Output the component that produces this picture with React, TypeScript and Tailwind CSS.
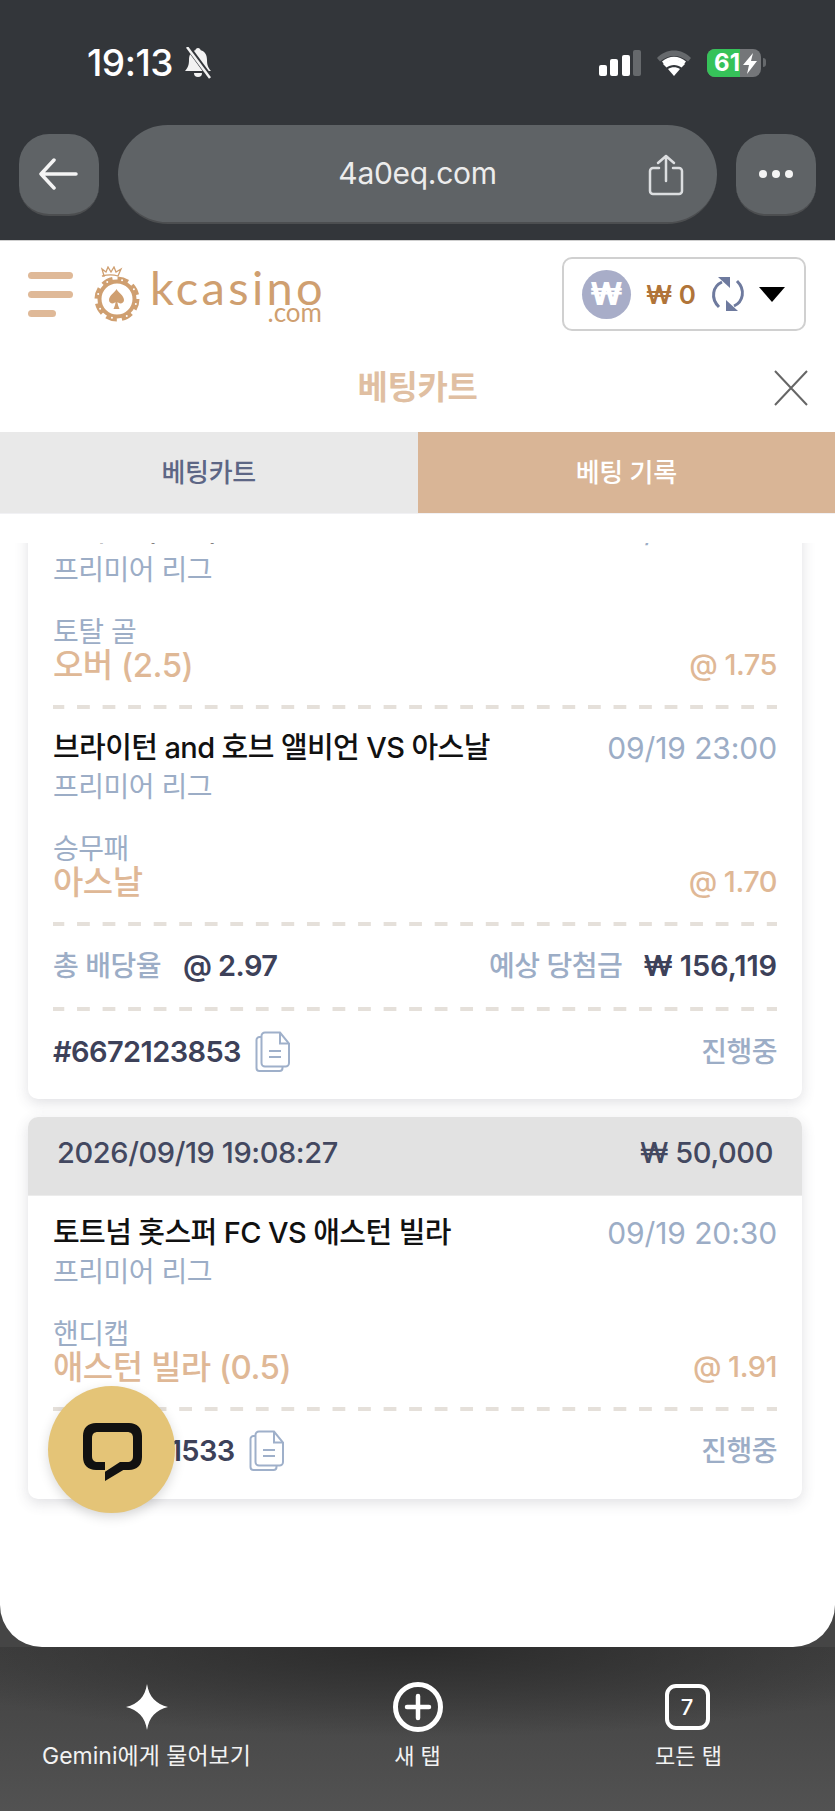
import React from "react";

const Dash = () => (
  <div className="h-[4px] w-full bg-[linear-gradient(90deg,#e5e0da_50%,transparent_50%)] bg-[length:25.55px_4px] bg-[position:-1.5px_0]" />
);

const Doc = () => (
  <svg width="36" height="42" viewBox="0 0 36 42" fill="none" stroke="#9fb0ca" strokeWidth="2">
    <path d="M7 6H4.5A3 3 0 0 0 1.5 9v28a3 3 0 0 0 3 3h20a3 3 0 0 0 3-3v-1" />
    <path d="M10 1.5h15l9 11V32a3.5 3.5 0 0 1-3.500 3.500H10A3.500 3.500 0 0 1 6.500 32V5A3.500 3.500 0 0 1 10 1.500Z" />
    <path d="M25 1.500v11h9" />
    <path d="M14 20h12M14 26h12" />
  </svg>
);

type Bet = { title: string; time: string; market: string; pick: string; odds: string };

const BetRow = ({ b }: { b: Bet }) => (
  <div className="px-[25px]">
    <div className="flex h-[38px] items-center justify-between">
      <span className="text-[29px] font-medium leading-[34px] tracking-[-0.6px] text-[#111]">{b.title}</span>
      <span className="text-[30px] leading-[34px] tracking-[-0.1px] text-[#9cadc6]">{b.time}</span>
    </div>
    <div className="flex h-[38px] items-center pt-[2px] text-[28px] leading-[34px] tracking-[-0.5px] text-[#9cadc6]">프리미어 리그</div>
    <div className="mt-[26px] flex h-[34px] items-center pt-[1px] text-[28px] leading-[32px] tracking-[-0.5px] text-[#9cadc6]">{b.market}</div>
    <div className="flex h-[34px] items-center justify-between text-[#dfb896]">
      <span className="text-[33px] font-medium leading-[34px] tracking-[-0.5px]">{b.pick}</span>
      <span className="text-[29px] font-medium leading-[34px] tracking-[-0.5px]">{b.odds}</span>
    </div>
  </div>
);

const Footer = ({ id }: { id: string }) => (
  <div className="flex h-[40px] items-center justify-between px-[25px]">
    <div className="flex items-center gap-[14px]">
      <span className="text-[29px] font-semibold tracking-[-0.6px] text-[#3d4159]">{id}</span>
      <Doc />
    </div>
    <span className="text-[28px] font-medium tracking-[-0.5px] text-[#9cadc6]">진행중</span>
  </div>
);

const Card = ({ children }: { children: React.ReactNode }) => (
  <div className="overflow-hidden rounded-[10px] bg-white shadow-[0_4px_14px_rgba(60,60,80,0.16)]">{children}</div>
);

const teeth = [0, 45, 90, 135, 180, 225, 270, 315];

export default function App() {
  return (
    <div className="relative flex h-[1811px] w-[835px] flex-col overflow-hidden bg-[#454545] font-['Inter','Noto_Sans_CJK_KR',sans-serif]">
      {/* browser chrome */}
      <div className="h-[240px] shrink-0 bg-[#33363a]">
        <div className="flex h-[125px] items-center justify-between pl-[87px] pr-[69px]">
          <div className="flex items-center gap-[10px]">
            <span className="text-[37px] font-medium tracking-[-0.5px] text-white">19:13</span>
            <svg width="30" height="32" viewBox="0 0 30 32">
              <path d="M15 1c1.500 0 2.500 1 2.700 2.300C22 4.500 24 8 24 13c0 5 1 7.500 4 11H2c3-3.500 4-6 4-11 0-5 2-8.500 6.300-9.700C12.500 2 13.500 1 15 1Z" fill="#f2f2f2" />
              <path d="M11 26h8a4 4 0 0 1-8 0Z" fill="#f2f2f2" />
              <path d="M5 0l22 30" stroke="#33363a" strokeWidth="5" />
              <path d="M4 0l23 31" stroke="#f2f2f2" strokeWidth="2.500" />
            </svg>
          </div>
          <div className="flex items-center">
            <svg width="42" height="26" viewBox="0 0 42 26" className="mr-[15px]">
              <rect x="0" y="15" width="8" height="11" rx="2" fill="#fff" />
              <rect x="11" y="9" width="8" height="17" rx="2" fill="#fff" />
              <rect x="23" y="5" width="8" height="21" rx="2" fill="#fff" />
              <rect x="34" y="0" width="8" height="26" rx="2" fill="#66696c" />
            </svg>
            <svg width="36" height="28" viewBox="0 0 36 28" className="mr-[15px]">
              <path d="M1 9C10 -1 26 -1 35 9l-3 3.500C24 5 12 5 4 12.500Z" fill="#66696c" />
              <path d="M7 15c6-6 16-6 22 0l-3.500 3.500c-4-3.500-11-3.500-15 0Z" fill="#fff" />
              <path d="M6 12.500c7-6.500 17-6.500 24 0l-2 2.500c-6-5.500-14-5.500-20 0Z" fill="#fff" />
              <path d="M12 20c3.500-2.500 8.500-2.500 12 0l-6 7Z" fill="#fff" />
            </svg>
            <div className="flex h-[28px] w-[54px] overflow-hidden rounded-[8px] bg-[#747679]">
              <div className="flex h-full w-[33px] items-center justify-end bg-[#36c259] text-[24px] font-bold leading-none text-white">61</div>
              <svg width="21" height="28" viewBox="0 0 21 28">
                <path d="M13 4 3 16h6l-2 9 10-13h-6Z" fill="#fff" />
              </svg>
            </div>
            <div className="ml-[2px] h-[9px] w-[3px] rounded-r-[3px] bg-[#66696c]" />
          </div>
        </div>
        <div className="flex h-[99px] items-center gap-[19px] px-[19px]">
          <div className="flex h-[82px] w-[80px] items-center justify-center rounded-[30px] border-b-2 border-[#4c4e50] bg-[#5f6366]">
            <svg width="40" height="32" viewBox="0 0 40 32" fill="none" stroke="#f4f4f4" strokeWidth="3.500" strokeLinecap="round" strokeLinejoin="round" className="-ml-[2px]">
              <path d="M38 16H3M16 2 3 16l13 14" />
            </svg>
          </div>
          <div className="relative flex h-[99px] flex-1 items-center justify-center rounded-[50px] border-b-2 border-[#4c4e50] bg-[#5f6366]">
            <span className="text-[30px] tracking-[-0.3px] text-[#ececec]">4a0eq.com</span>
            <svg width="36" height="42" viewBox="0 0 36 42" fill="none" stroke="#dcdee0" strokeWidth="2.500" strokeLinecap="round" strokeLinejoin="round" className="absolute right-[33px] top-[29px]">
              <path d="M11 14H5a3 3 0 0 0-3 3v20a3 3 0 0 0 3 3h26a3 3 0 0 0 3-3V17a3 3 0 0 0-3-3h-6" />
              <path d="M18 27V2M10 9l8-7 8 7" />
            </svg>
          </div>
          <div className="flex h-[82px] w-[80px] items-center justify-center gap-[5px] rounded-[30px] border-b-2 border-[#4c4e50] bg-[#5f6366]">
            <div className="h-[8px] w-[8px] rounded-full bg-[#f4f4f4]" />
            <div className="h-[8px] w-[8px] rounded-full bg-[#f4f4f4]" />
            <div className="h-[8px] w-[8px] rounded-full bg-[#f4f4f4]" />
          </div>
        </div>
      </div>

      {/* page sheet */}
      <div className="relative flex h-[1407px] shrink-0 flex-col overflow-hidden rounded-b-[42px] border-t border-[#cfcfcf] bg-white">
        <div className="flex h-[106px] shrink-0 items-center justify-between pl-[28px] pr-[29px]">
          <div className="flex items-center">
            <div className="flex w-[45px] flex-col gap-[12px]">
              <div className="h-[7px] w-[45px] rounded-full bg-[#dfb998]" />
              <div className="h-[7px] w-[45px] rounded-full bg-[#dfb998]" />
              <div className="h-[7px] w-[28px] rounded-full bg-[#dfb998]" />
            </div>
            <svg width="46" height="56" viewBox="0 0 46 56" className="ml-[21px]">
              <path d="M10 10 8 3l4 3 2-5 3 5 3-5 2 5 5-3-3 7c-5-1.500-10-1.500-16 0Z" fill="none" stroke="#cf9f70" strokeWidth="1.300" />
              <circle cx="23" cy="33" r="17.500" fill="none" stroke="#cf9f70" strokeWidth="4" />
              <circle cx="23" cy="33" r="20" fill="none" stroke="#cf9f70" strokeWidth="5" strokeDasharray="10.700 5" />
              {teeth.map((a) => {
                const t = ((a + 15) * Math.PI) / 180;
                return <circle key={a} cx={23 + 19.5 * Math.cos(t)} cy={33 + 19.5 * Math.sin(t)} r="1" fill="#fff" />;
              })}
              <path d="M22.500 23c2 4 7.500 6.500 7.500 11 0 3.500-4.500 4.500-6.500 2 0 2 1 5 2 7h-6c1-2 2-5 2-7-2 2.500-6.500 1.500-6.500-2 0-4.500 5.500-7 7.500-11Z" fill="#cf9f70" />
            </svg>
            <div className="ml-[10px] flex w-[172px] flex-col items-end">
              <span className="h-[35px] w-full text-left font-['Lato',sans-serif] text-[47px] leading-[35px] tracking-[3.300px] text-[#cf9f70]">kcasino</span>
              <span className="h-[14px] font-['Lato',sans-serif] text-[26px] leading-[14px] text-[#cf9f70]">.com</span>
            </div>
          </div>
          <div className="flex h-[74px] w-[244px] items-center rounded-[10px] border-2 border-[#d0d0d0] pl-[18px]">
            <div className="flex h-[49px] w-[49px] items-center justify-center rounded-full bg-[#a8adc8] text-[31px] font-extrabold text-white">₩</div>
            <span className="ml-[15px] whitespace-pre text-[26px] font-semibold text-[#b07439]">₩ 0</span>
            <svg width="36" height="36" viewBox="0 0 36 36" fill="none" className="ml-[14px]">
              <path d="M12 6C3 10 0 22 9 31" stroke="#6e7a9e" strokeWidth="3" />
              <path d="M24 30c9-4 12-16 3-25" stroke="#6e7a9e" strokeWidth="3" />
              <path d="M8 1h12v11Z" fill="#6e7a9e" />
              <path d="M28 35H16V24Z" fill="#6e7a9e" />
            </svg>
            <svg width="26" height="15" viewBox="0 0 26 15" className="ml-[13px]">
              <path d="M0 0h26L13 15Z" fill="#000" />
            </svg>
          </div>
        </div>
        <div className="relative flex h-[85px] shrink-0 items-center justify-center pb-[3px]">
          <span className="text-[33px] font-semibold tracking-[-0.3px] text-[#e0bfa2]">베팅카트</span>
          <svg width="36" height="36" viewBox="0 0 36 36" stroke="#666" strokeWidth="2" className="absolute right-[26px] top-[23px]">
            <path d="M2 1l32 34M34 1 2 35" />
          </svg>
        </div>
        <div className="grid h-[82px] shrink-0 grid-cols-2 border-b border-[#f1f1f4] text-[26px] font-medium tracking-[-0.3px]">
          <div className="flex items-center justify-center bg-[#e9e9e9] text-[#5d6685]">베팅카트</div>
          <div className="flex items-center justify-center bg-[#d9b596] text-white">베팅 기록</div>
        </div>

        <div className="mt-[29px] flex flex-1 flex-col gap-[18px] overflow-hidden pl-[28px] pr-[33px]">
          <div className="-mt-[31px] shrink-0">
            <Card>
              <BetRow b={{ title: "맨체스터 시티 VS 브렌트", time: "09/19 20:30", market: "토탈 골", pick: "오버 (2.5)", odds: "@ 1.75" }} />
              <div className="mb-[20px] mt-[23px] px-[25px]"><Dash /></div>
              <BetRow b={{ title: "브라이턴 and 호브 앨비언 VS 아스날", time: "09/19 23:00", market: "승무패", pick: "아스날", odds: "@ 1.70" }} />
              <div className="mt-[23px] px-[25px]"><Dash /></div>
              <div className="mb-[21px] mt-[20px] flex h-[40px] items-center justify-between px-[25px]">
                <div className="flex items-center gap-[22px]">
                  <span className="text-[28px] font-medium tracking-[-0.5px] text-[#9cadc6]">총 배당율</span>
                  <span className="text-[29px] font-semibold tracking-[-0.6px] text-[#3d4159]">@ 2.97</span>
                </div>
                <div className="flex items-center gap-[21px]">
                  <span className="text-[28px] font-medium tracking-[-0.5px] text-[#9cadc6]">예상 당첨금</span>
                  <span className="text-[29px] font-semibold tracking-[-0.1px] text-[#3d4159]">₩ 156,119</span>
                </div>
              </div>
              <div className="px-[25px]"><Dash /></div>
              <div className="pb-[27px] pt-[21px]"><Footer id="#6672123853" /></div>
            </Card>
          </div>
          <div className="shrink-0">
            <Card>
              <div className="flex h-[79px] items-center justify-between border-b border-[#ececec] bg-[#e2e2e2] px-[29px] pb-[6px] text-[29px] font-medium tracking-[-0.4px] text-[#434860]">
                <span>2026/09/19 19:08:27</span>
                <span>₩ 50,000</span>
              </div>
              <div className="pt-[18px]">
                <BetRow b={{ title: "토트넘 홋스퍼 FC VS 애스턴 빌라", time: "09/19 20:30", market: "핸디캡", pick: "애스턴 빌라 (0.5)", odds: "@ 1.91" }} />
              </div>
              <div className="mt-[23px] px-[25px]"><Dash /></div>
              <div className="pb-[28px] pt-[20px]"><Footer id="#6672121533" /></div>
            </Card>
          </div>
        </div>

        <div className="absolute left-[48px] top-[1145px] flex h-[127px] w-[127px] items-center justify-center rounded-full bg-[#e4c477] shadow-[0_4px_12px_rgba(0,0,0,0.15)]">
          <svg width="60" height="60" viewBox="0 0 60 60" className="ml-[3px] mt-[7px]">
            <path
              fillRule="evenodd"
              d="M13 0H46C54 0 59 5 59 13V34C59 42 54 47 46 47H40.300L22 58V47H13C5 47 0 42 0 34V13C0 5 5 0 13 0ZM15 9C11 9 9 11 9 15V33C9 37 11 39 15 39H22V48.700L37 39H44C48 39 50 37 50 33V15C50 11 48 9 44 9Z"
              fill="#111"
            />
          </svg>
        </div>
      </div>

      {/* bottom toolbar */}
      <div className="grid flex-1 grid-cols-3 bg-[radial-gradient(ellipse_65%_55%_at_50%_0%,#2b2b2b_0%,#2b2b2b00_100%),linear-gradient(180deg,#414141_0%,#525252_100%)] px-[11px] text-[22px] text-[#f2f2f2]">
        <div className="flex flex-col items-center pt-[35px]">
          <svg width="46" height="50" viewBox="0 0 46 50">
            <path d="M23 2c2 13 9 20 21 23-12 3-19 10-21 23-2-13-9-20-21-23 12-3 19-10 21-23Z" fill="#fff" />
          </svg>
          <span className="mt-[9px] text-[23px] leading-[30px]">Gemini에게 물어보기</span>
        </div>
        <div className="flex flex-col items-center pt-[35px]">
          <svg width="50" height="50" viewBox="0 0 50 50" fill="none" stroke="#fff">
            <circle cx="25" cy="25" r="22.500" strokeWidth="5" />
            <path d="M25 14v22M14 25h22" strokeWidth="4.500" strokeLinecap="round" />
          </svg>
          <span className="mt-[9px] leading-[30px]">새 탭</span>
        </div>
        <div className="flex flex-col items-center pt-[35px]">
          <div className="mr-[3px] mt-[2px] flex h-[46px] w-[45px] items-center justify-center rounded-[11px] border-[4px] border-white text-[22px] font-medium text-white">7</div>
          <span className="mt-[11px] leading-[30px]">모든 탭</span>
        </div>
      </div>
    </div>
  );
}
